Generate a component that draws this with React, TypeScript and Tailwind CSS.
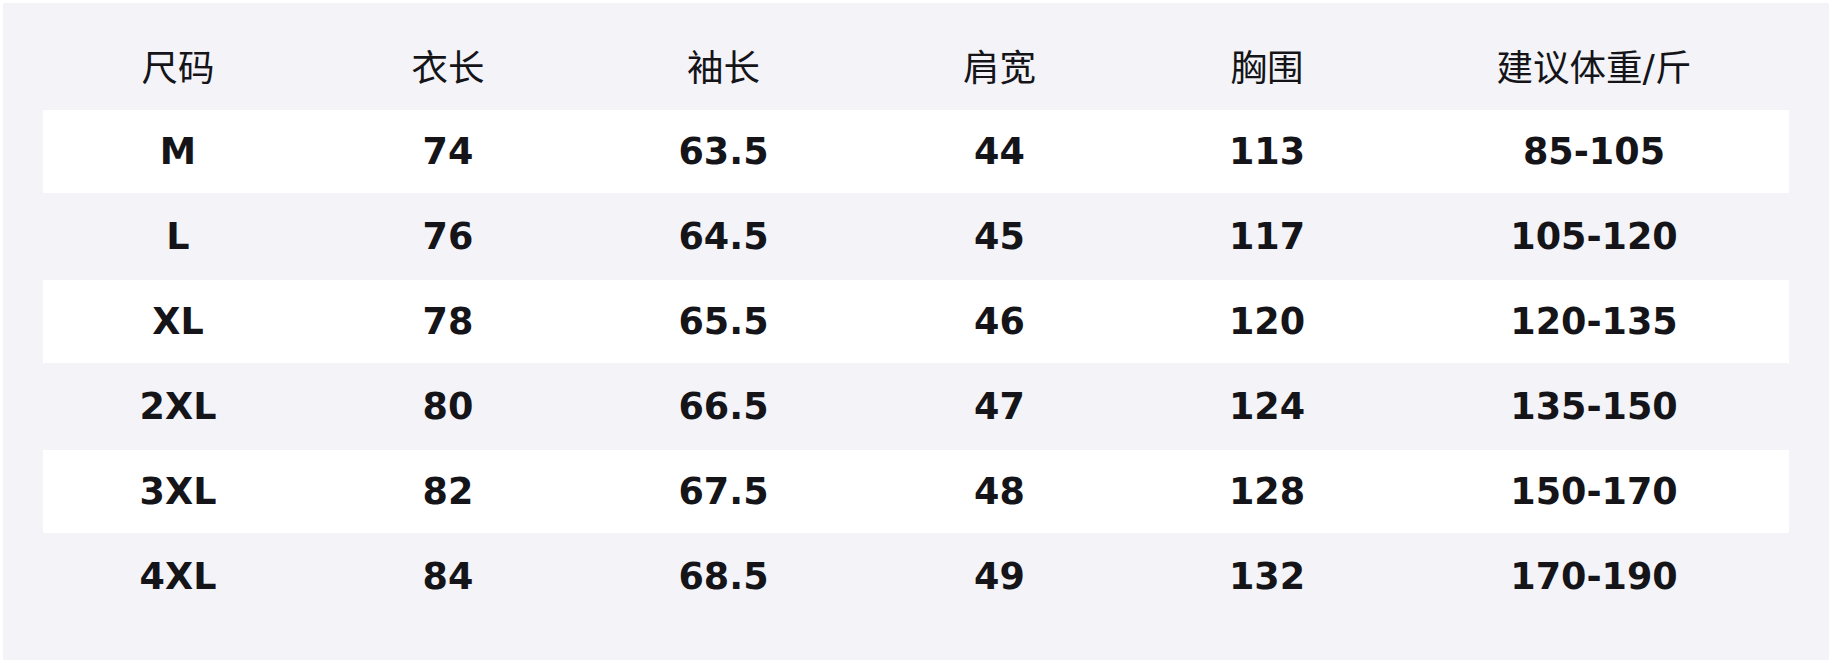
const headers = ["尺码", "衣长", "袖长", "肩宽", "胸围", "建议体重/斤"];

const rows = [
  ["M", "74", "63.5", "44", "113", "85-105"],
  ["L", "76", "64.5", "45", "117", "105-120"],
  ["XL", "78", "65.5", "46", "120", "120-135"],
  ["2XL", "80", "66.5", "47", "124", "135-150"],
  ["3XL", "82", "67.5", "48", "128", "150-170"],
  ["4XL", "84", "68.5", "49", "132", "170-190"],
];

const cols = "grid grid-cols-[270px_270px_281px_271px_264px_1fr]";

export default function App() {
  return (
    <div
      className="w-[1832px] h-[663px] bg-white p-[3px]"
      style={{ fontFamily: '"DejaVu Sans", "Noto Sans CJK SC", sans-serif' }}
    >
      <div className="h-[657px] bg-[#f3f3f8] px-[40px] pt-[22px] pb-[40px] text-[#141419]">
        <div className={`${cols} h-[85px] items-center text-[36.5px] font-normal`}>
          {headers.map((h) => (
            <div key={h} className="text-center pt-[4px]">
              {h}
            </div>
          ))}
        </div>
        {rows.map((row, i) => (
          <div
            key={row[0]}
            className={`${cols} h-[85px] items-center text-[36.5px] font-bold border-b-2 border-[#f3f3f8] ${
              i % 2 === 0 ? "bg-white" : ""
            }`}
          >
            {row.map((cell, j) => (
              <div key={j} className="text-center pt-[1px]">
                {cell}
              </div>
            ))}
          </div>
        ))}
      </div>
    </div>
  );
}
